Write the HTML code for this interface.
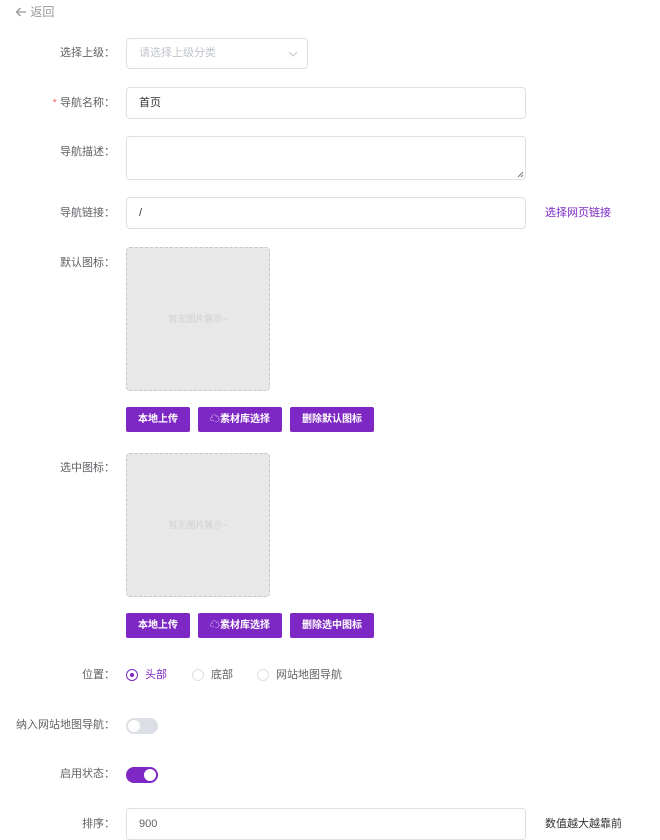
<!DOCTYPE html>
<html><head><meta charset="utf-8"><style>
body{margin:0;width:660px;height:837px;overflow:hidden;background:#fff;font-family:"Liberation Sans","Noto Sans CJK SC",sans-serif;font-size:11px;color:#606266;position:relative}
.a{position:absolute}
.lbl{position:absolute;right:545px;text-align:right;white-space:nowrap;line-height:16px;font-size:11px}
.inp{position:absolute;left:126px;border:1px solid #dcdfe6;border-radius:4px;box-sizing:border-box;background:#fff;padding-left:12px;color:#333}
.box{position:absolute;left:126px;width:144px;height:144px;box-sizing:border-box;border:1px dashed #c8c8c8;border-radius:4px;background:#e8e8e8;color:#d0d0d0;font-size:9px;text-align:center;line-height:142px}
.btn{position:absolute;height:25px;line-height:25px;background:#7d27c4;color:#fff;font-size:10px;font-weight:bold;text-align:center;border-radius:2px}
.rad{position:absolute;width:10px;height:10px;border:1px solid #dcdfe6;border-radius:50%;background:#fff}
</style></head><body>
<div class="a" style="left:15px;top:4px;color:#999;font-size:12px;line-height:16px"><svg width="12" height="10" viewBox="0 0 12 10" style="vertical-align:-1px"><path d="M11 5H1.5M5.5 1L1.5 5l4 4" stroke="#999" stroke-width="1.3" fill="none"/></svg> 返回</div>

<div class="lbl" style="top:45px">选择上级：</div>
<div class="inp" style="top:38px;width:182px;height:31px;line-height:29px;color:#c0c4cc">请选择上级分类<svg class="a" style="right:9px;top:12px" width="10" height="6" viewBox="0 0 10 6"><path d="M1 1l4 4 4-4" stroke="#c0c4cc" fill="none"/></svg></div>

<div class="lbl" style="top:95px"><span style="color:#f56c6c">*</span> 导航名称：</div>
<div class="inp" style="top:87px;width:400px;height:32px;line-height:30px">首页</div>

<div class="lbl" style="top:144px">导航描述：</div>
<div class="inp" style="top:136px;width:400px;height:44px"><svg class="a" style="right:1px;bottom:1px" width="7" height="7"><path d="M6 1L1 6M6 4L4 6" stroke="#777"/></svg></div>

<div class="lbl" style="top:205px">导航链接：</div>
<div class="inp" style="top:197px;width:400px;height:32px;line-height:30px">/</div>
<div class="a" style="left:545px;top:205px;color:#7d27c4;line-height:16px">选择网页链接</div>

<div class="lbl" style="top:255px">默认图标：</div>
<div class="box" style="top:247px">暂无图片展示~</div>
<div class="btn" style="left:126px;top:407px;width:64px">本地上传</div>
<div class="btn" style="left:198px;top:407px;width:84px">☁素材库选择</div>
<div class="btn" style="left:290px;top:407px;width:84px">删除默认图标</div>

<div class="lbl" style="top:460px">选中图标：</div>
<div class="box" style="top:453px">暂无图片展示~</div>
<div class="btn" style="left:126px;top:613px;width:64px">本地上传</div>
<div class="btn" style="left:198px;top:613px;width:84px">☁素材库选择</div>
<div class="btn" style="left:290px;top:613px;width:84px">删除选中图标</div>

<div class="lbl" style="top:667px">位置：</div>
<div class="rad" style="left:126px;top:669px;border-color:#7d27c4"><div class="a" style="left:3px;top:3px;width:4px;height:4px;border-radius:50%;background:#7d27c4"></div></div>
<div class="a" style="left:145px;top:667px;color:#7d27c4;line-height:16px">头部</div>
<div class="rad" style="left:192px;top:669px"></div>
<div class="a" style="left:211px;top:667px;line-height:16px">底部</div>
<div class="rad" style="left:257px;top:669px"></div>
<div class="a" style="left:276px;top:667px;line-height:16px">网站地图导航</div>

<div class="lbl" style="top:717px">纳入网站地图导航：</div>
<div class="a" style="left:126px;top:718px;width:32px;height:16px;border-radius:8px;background:#dcdfe6"><div class="a" style="left:2px;top:2px;width:12px;height:12px;border-radius:50%;background:#fff"></div></div>

<div class="lbl" style="top:766px">启用状态：</div>
<div class="a" style="left:126px;top:767px;width:32px;height:16px;border-radius:8px;background:#7d27c4"><div class="a" style="left:18px;top:2px;width:12px;height:12px;border-radius:50%;background:#fff"></div></div>

<div class="lbl" style="top:816px">排序：</div>
<div class="inp" style="top:808px;width:400px;height:32px;line-height:30px;color:#606266">900</div>
<div class="a" style="left:545px;top:816px;color:#333;line-height:16px">数值越大越靠前</div>
</body></html>
